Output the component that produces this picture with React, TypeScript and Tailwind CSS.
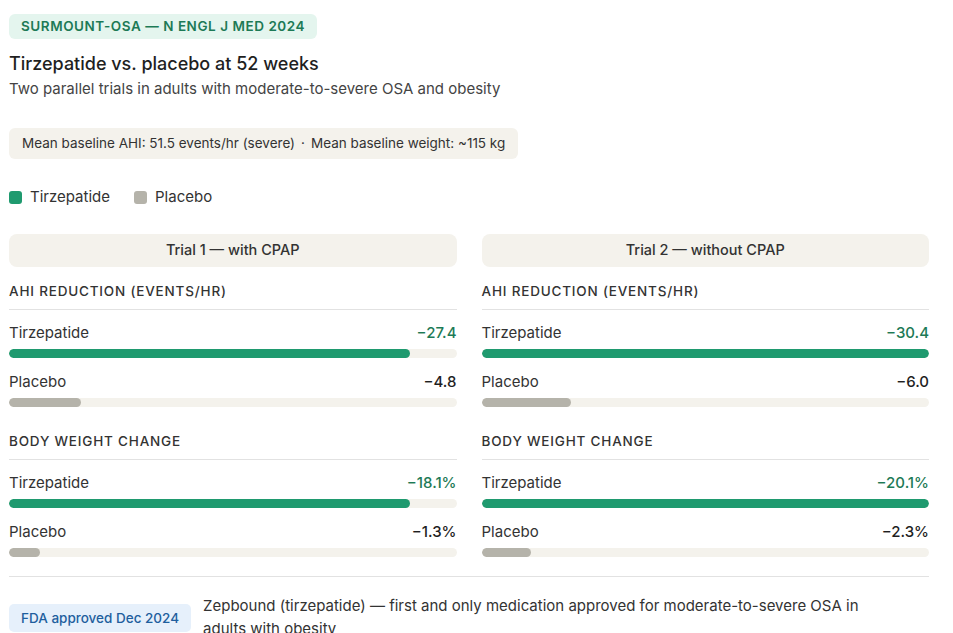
import React from "react";

type Row = { label: string; value: string; pct: number; green: boolean };
type Sec = { title: string; rows: Row[] };

const trials: { name: string; secs: Sec[] }[] = [
  {
    name: "Trial 1 — with CPAP",
    secs: [
      { title: "AHI reduction (events/hr)", rows: [
        { label: "Tirzepatide", value: "−27.4", pct: 89.7, green: true },
        { label: "Placebo", value: "−4.8", pct: 16, green: false },
      ]},
      { title: "Body weight change", rows: [
        { label: "Tirzepatide", value: "−18.1%", pct: 89.7, green: true },
        { label: "Placebo", value: "−1.3%", pct: 7, green: false },
      ]},
    ],
  },
  {
    name: "Trial 2 — without CPAP",
    secs: [
      { title: "AHI reduction (events/hr)", rows: [
        { label: "Tirzepatide", value: "−30.4", pct: 100, green: true },
        { label: "Placebo", value: "−6.0", pct: 20, green: false },
      ]},
      { title: "Body weight change", rows: [
        { label: "Tirzepatide", value: "−20.1%", pct: 100, green: true },
        { label: "Placebo", value: "−2.3%", pct: 11, green: false },
      ]},
    ],
  },
];

export default function App() {
  return (
    <div className="w-[953px] h-[633px] bg-white text-[#1f1f1f] px-[9px] pt-[13px] overflow-hidden" style={{ fontFamily: "Inter, 'Noto Sans', sans-serif" }}>
      <div className="inline-block bg-[#e4f5ee] text-[#1d7a56] rounded-[6px] px-[12px] h-[25px] leading-[25px] text-[13.5px] font-semibold tracking-[0.04em]">
        SURMOUNT-OSA — N ENGL J MED 2024
      </div>
      <div className="mt-[13px] text-[18px] font-medium leading-[24px]">Tirzepatide vs. placebo at 52 weeks</div>
      <div className="mt-[3px] text-[15px] text-[#444] leading-[20px]">Two parallel trials in adults with moderate-to-severe OSA and obesity</div>
      <div className="mt-[29px] inline-block bg-[#f4f2ec] rounded-[6px] px-[13px] h-[31px] leading-[31px] text-[13.5px] text-[#333]">
        Mean baseline AHI: 51.5 events/hr (severe)<span className="mx-[6px]">·</span>Mean baseline weight: ~115 kg
      </div>
      <div className="mt-[27px] flex items-center gap-[24px] text-[15px] text-[#333]">
        <div className="flex items-center gap-[8px]"><span className="w-[13px] h-[13px] rounded-[3px] bg-[#1f9a6f]" />Tirzepatide</div>
        <div className="flex items-center gap-[8px]"><span className="w-[13px] h-[13px] rounded-[3px] bg-[#b5b3aa]" />Placebo</div>
      </div>
      <div className="mt-[25px] grid grid-cols-2 gap-[25px] w-[920px]">
        {trials.map((t) => (
          <div key={t.name}>
            <div className="h-[33px] bg-[#f4f2ec] rounded-[8px] flex items-center justify-center text-[14.5px] font-medium text-[#333]">{t.name}</div>
            {t.secs.map((s, si) => (
              <div key={s.title} className={si === 0 ? "mt-[14px]" : "mt-[24px]"}>
                <div className="text-[13.5px] font-medium uppercase tracking-[0.06em] text-[#333] pb-[8px] border-b border-[#e2e2e2]">{s.title}</div>
                {s.rows.map((r, ri) => (
                  <div key={r.label} className={ri === 0 ? "mt-[13px]" : "mt-[14px]"}>
                    <div className="flex justify-between text-[15px] leading-[20px]">
                      <span className="text-[#333]">{r.label}</span>
                      <span className={r.green ? "text-[#1d7a56] font-medium" : "text-[#1f1f1f] font-medium"}>{r.value}</span>
                    </div>
                    <div className="mt-[6px] h-[9px] rounded-full bg-[#f4f2ec] overflow-hidden">
                      <div className={r.green ? "h-full rounded-full bg-[#1f9a6f]" : "h-full rounded-full bg-[#b5b3aa]"} style={{ width: `${r.pct}%` }} />
                    </div>
                  </div>
                ))}
              </div>
            ))}
          </div>
        ))}
      </div>
      <div className="mt-[19px] w-[920px] border-t border-[#e2e2e2] pt-[17px] flex gap-[12px] items-start">
        <div className="mt-[10px] shrink-0 bg-[#e6f0fb] text-[#1f5f9e] rounded-[5px] px-[12px] h-[28px] leading-[28px] text-[13.5px] font-medium">FDA approved Dec 2024</div>
        <div className="text-[15px] leading-[23px] text-[#333] pr-[30px]">Zepbound (tirzepatide) — first and only medication approved for moderate-to-severe OSA in adults with obesity</div>
      </div>
    </div>
  );
}
